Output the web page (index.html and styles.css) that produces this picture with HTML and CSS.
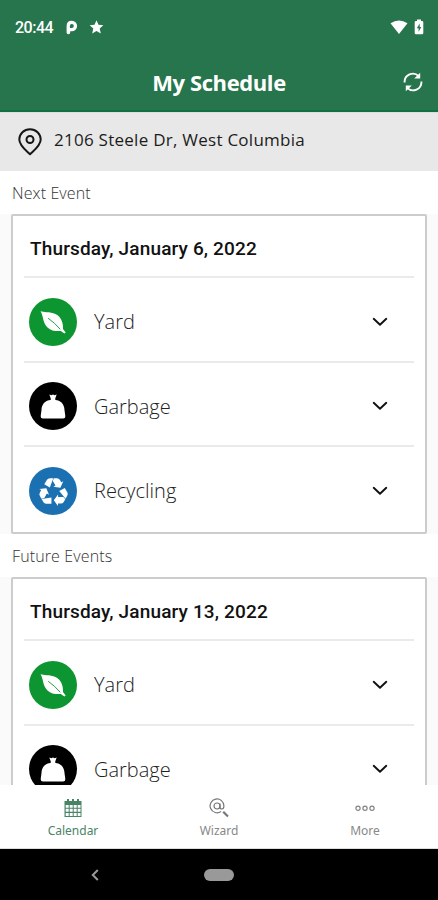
FILE: index.html
```html
<!DOCTYPE html>
<html lang="en">
<head>
<meta charset="utf-8">
<meta name="viewport" content="width=device-width, initial-scale=1">
<title>My Schedule</title>
<link rel="stylesheet" href="styles.css">
</head>
<body>
<svg width="0" height="0" class="defs" aria-hidden="true">
  <symbol id="leaf" viewBox="0 0 48 48">
    <path fill="#fff" d="M11.500 13C14 14.500 21 13.500 26.500 16C32.500 19 34.300 25 34 31L36.700 34.400L35.400 35.600L31.800 33C27.500 33.300 22.500 33.300 18.500 29.500C13.500 24.500 14.500 18 11.500 13Z"/>
    <path fill="none" stroke="#0c9530" stroke-width=".9" stroke-linecap="round" d="M19.500 20.500Q26 25 31 31"/>
  </symbol>
  <symbol id="bag" viewBox="0 0 48 48">
    <path fill="#fff" d="M20.300 12.500L22.300 13.200L24 12.600L25.700 13.200L27.700 12.500L26.300 16.300V18C31.500 18.300 35.300 22 35.500 28L36.300 34Q36.400 36.500 34 36.500H14Q11.600 36.500 11.700 34L12.500 28C12.700 22 16.500 18.300 21.700 18V16.300Z"/>
  </symbol>
  <symbol id="recycle" viewBox="0 0 48 48">
    <g fill="#fff">
      <g id="arm">
        <path d="M15.300 17.300L18 12.700Q19 11.200 21 11.200H24.300L20.800 20.500Z"/>
        <path d="M24.800 11.200H28Q29.800 11.200 30.800 12.800L32.300 15.300L34.300 14.200L31.400 20.700L24.400 19.800L26.500 18.500L23.800 14Z"/>
      </g>
      <use href="#arm" transform="rotate(120 24.500 25)"/>
      <use href="#arm" transform="rotate(240 24.500 25)"/>
    </g>
  </symbol>
  <symbol id="chevron" viewBox="0 0 18 12">
    <path fill="none" stroke="#111" stroke-width="1.900" stroke-linecap="round" stroke-linejoin="round" d="M2.700 2.800L9 8.800L15.300 2.800"/>
  </symbol>
</svg>

<header class="top">
  <div class="status">
    <span class="clock">20:44</span>
    <svg class="s-p" viewBox="0 0 12 15"><path fill="#fff" fill-rule="evenodd" d="M5.800 .7A5.300 5.300 0 0 1 5.800 11.300H4.200V12.500Q4.200 14.300 2.400 14.300Q.6 14.300 .6 12.500V6Q.6 .7 5.800 .7ZM5.800 4A2 2 0 0 0 3.900 6V8H5.800A2 2 0 0 0 5.800 4Z"/></svg>
    <svg class="s-star" viewBox="0 0 14 14"><path fill="#fff" d="M7 .3L9 4.800L13.800 5.300L10.200 8.500L11.300 13.400L7 10.900L2.700 13.400L3.800 8.500L.2 5.300L5 4.800Z"/></svg>
    <svg class="s-wifi" viewBox="0 0 18 15"><path fill="#fff" d="M.5 3.200Q9-2.400 17.500 3.200L9 14Z"/></svg>
    <svg class="s-batt" viewBox="0 0 10 16"><path fill="#fff" d="M3 .5H7V2H8Q9.300 2 9.300 3.300V14Q9.300 15.300 8 15.300H2Q.7 15.300 .7 14V3.300Q.7 2 2 2H3Z"/><path fill="#26754d" d="M5.700 4.500L2.800 9.200H4.600V12.800L7.300 8H5.700Z"/></svg>
  </div>
  <div class="titlebar">
    <h1>My Schedule</h1>
    <svg class="refresh" viewBox="0 0 20 20"><g fill="none" stroke="#fff" stroke-width="1.900"><path d="M1.600 10.500A8.300 8.300 0 0 1 15.700 4.100"/><path d="M18.400 9.500A8.300 8.300 0 0 1 4.300 15.900"/></g><path fill="#fff" d="M17.200.8V6.600H11.200ZM2.800 19.200V13.400H8.800Z"/></svg>
  </div>
</header>

<div class="address">
  <svg class="pin" viewBox="0 0 24 28"><g fill="none" stroke="#161616" stroke-width="2"><path stroke-linejoin="round" d="M12 26.300C8 22.500 1.300 17.500 1.300 11.500A10.700 10.200 0 0 1 22.700 11.500C22.700 17.500 16 22.500 12 26.300Z"/><circle cx="12" cy="11.500" r="3.500"/></g></svg>
  <span>2106 Steele Dr, West Columbia</span>
</div>

<main>
  <h2>Next Event</h2>
  <section class="card">
    <h3>Thursday, January 6, 2022</h3>
    <div class="row"><svg class="badge yard"><use href="#leaf"/></svg><span>Yard</span><svg class="chev"><use href="#chevron"/></svg></div>
    <div class="row"><svg class="badge garbage"><use href="#bag"/></svg><span>Garbage</span><svg class="chev"><use href="#chevron"/></svg></div>
    <div class="row"><svg class="badge recycling"><use href="#recycle"/></svg><span>Recycling</span><svg class="chev"><use href="#chevron"/></svg></div>
  </section>
  <h2>Future Events</h2>
  <section class="card">
    <h3>Thursday, January 13, 2022</h3>
    <div class="row"><svg class="badge yard"><use href="#leaf"/></svg><span>Yard</span><svg class="chev"><use href="#chevron"/></svg></div>
    <div class="row"><svg class="badge garbage"><use href="#bag"/></svg><span>Garbage</span><svg class="chev"><use href="#chevron"/></svg></div>
  </section>
</main>

<nav class="tabs">
  <div class="tab active">
    <svg viewBox="0 0 20 20"><path fill="#4a8467" d="M1.500 3H4V1H6V3H9V1H11V3H14V1H16V3H18.500V19H1.500Z"/><path fill="#fff" d="M2.700 7h3v2.700h-3zm4 0h3v2.700h-3zm4 0h3v2.700h-3zm4 0h2.800v2.700h-2.800zM2.700 10.800h3v2.900h-3zm4 0h3v2.900h-3zm4 0h3v2.900h-3zm4 0h2.800v2.900h-2.800zM2.700 14.900h3v3h-3zm4 0h3v3h-3zm4 0h3v3h-3zm4 0h2.800v3h-2.800z"/></svg>
    <span>Calendar</span>
  </div>
  <div class="tab">
    <svg viewBox="0 0 20 20"><g fill="none" stroke="#777"><path stroke-width="1.200" d="M12 13.500A6.900 6.900 0 1 1 14.900 8Q14.900 11 12.800 11Q11 11 11 9V5.500"/><circle cx="8" cy="8" r="3" stroke-width="1.200"/><path stroke-width="2.200" d="M14.200 13.800L19 18.500"/></g></svg>
    <span>Wizard</span>
  </div>
  <div class="tab">
    <svg viewBox="0 0 20 20"><g fill="none" stroke="#858585" stroke-width="1.200"><circle cx="3" cy="10.300" r="2.100"/><circle cx="10" cy="10.300" r="2.100"/><circle cx="17" cy="10.300" r="2.100"/></g></svg>
    <span>More</span>
  </div>
</nav>
<footer class="system">
  <svg class="back" viewBox="0 0 8 12"><path fill="none" stroke="#999" stroke-width="2" d="M6.800 1L1.800 6L6.800 11"/></svg>
  <i class="home"></i>
</footer>
</body>
</html>
```
FILE: styles.css
```css
* { box-sizing: border-box; margin: 0; padding: 0; }
body {
  width: 438px;
  height: 900px;
  overflow: hidden;
  display: flex;
  flex-direction: column;
  background: #fff;
  font-family: "Open Sans", "Noto Sans", sans-serif;
  color: #111;
  white-space: nowrap;
}
svg { display: block; flex: none; }
.defs { position: absolute; }

.top { height: 112px; flex: none; background: #26754d; border-bottom: 2px solid #107043; color: #fff; }
.status { height: 54px; display: flex; align-items: center; padding: 0 14px 0 15px; }
.clock { width: 51px; font: 500 16px Roboto, sans-serif; letter-spacing: -0.5px; }
.s-p { width: 12px; height: 15px; margin-right: 11px; }
.s-star { width: 15px; height: 14px; }
.s-wifi { width: 18px; height: 15px; margin-left: auto; margin-right: 5px; position: relative; left: -1px; }
.s-batt { width: 10px; height: 16px; }
.titlebar { height: 56px; display: grid; grid-template-columns: 35px 1fr 35px; align-items: center; }
h1 { grid-column: 2; text-align: center; font-size: 22px; line-height: 30px; font-weight: 700; letter-spacing: -0.4px; }
.refresh { width: 20px; height: 20px; }

.address { height: 59px; flex: none; background: #e8e8e8; border-top: 1px solid #ddd; display: flex; align-items: center; padding-left: 18px; gap: 12px; font-size: 17px; letter-spacing: 0.26px; color: #1c1c1c; }
.address span { padding-bottom: 5px; }
.pin { width: 24px; height: 28px; }

main { height: 614px; flex: none; overflow: hidden; padding: 0 11px; background: #fff; }
h2 { height: 43px; line-height: 44px; padding-left: 1px; font-size: 16px; font-weight: 300; letter-spacing: 0.12px; color: #333; }
.card { border: 2px solid #ccc; border-radius: 2px; background: #fff; padding: 0 11px; height: 320px; box-shadow: 0 0 0 11px #fafafa; clip-path: inset(0 -11px); }
h3 { height: 60px; padding-left: 6px; font: 500 19px/66px Roboto, sans-serif; letter-spacing: 0.15px; }
.row { height: 84.500px; border-top: 2px solid #eaeaea; display: flex; align-items: center; padding: 5px 25px 0 5px; }
.row span { margin-left: 17px; font-size: 20px; line-height: 27px; font-weight: 300; color: #222; }
.badge { width: 48px; height: 48px; border-radius: 50%; }
.yard { background: #0c9530; }
.garbage { background: #000; }
.recycling { background: #1b70b2; }
.chev { width: 18px; height: 12px; margin-left: auto; }

.tabs { height: 64px; flex: none; display: grid; grid-template-columns: repeat(3, 1fr); background: #fff; border-bottom: 1px solid #ddd; }
.tab { display: flex; flex-direction: column; align-items: center; padding-top: 13px; font: 400 12px/18px "Noto Sans", sans-serif; color: #888; }
.tab svg { width: 20px; height: 20px; margin-bottom: 4px; }
.active { color: #4a8467; }
.system { flex: 1; background: #000; display: grid; grid-template-columns: 190px 58px 190px; align-items: center; justify-items: center; }
.back { width: 8px; height: 12px; }
.home { width: 30px; height: 12px; border-radius: 6px; background: #999; }
```
